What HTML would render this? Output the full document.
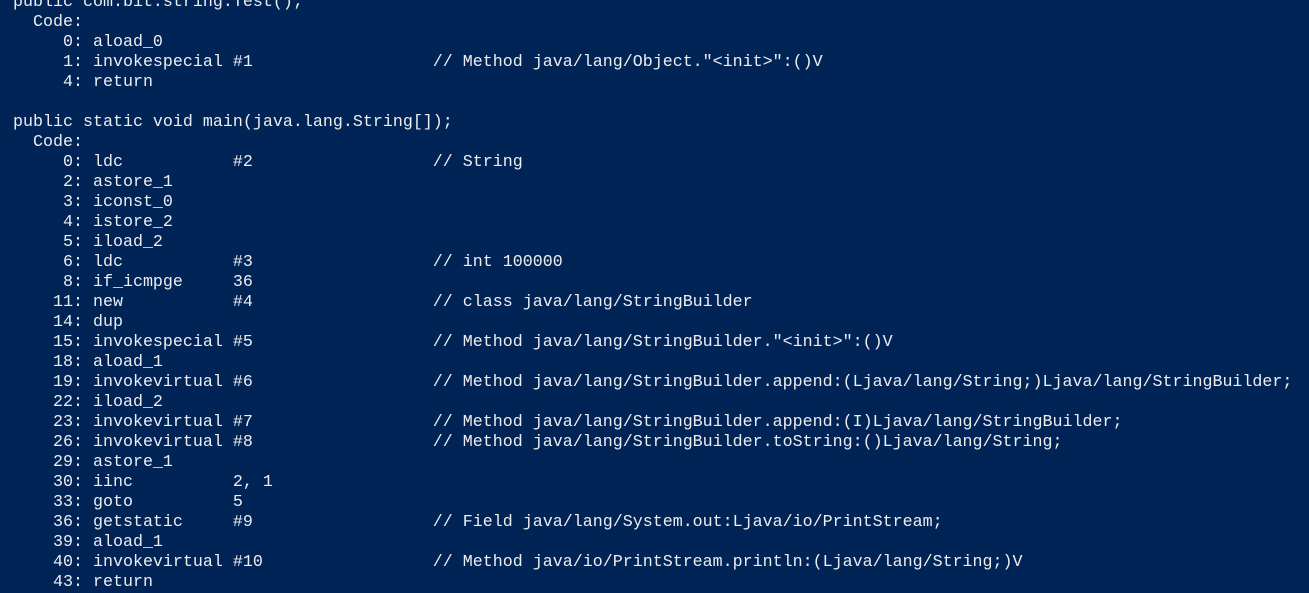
<!DOCTYPE html>
<html><head><meta charset="utf-8"><style>
html,body{margin:0;padding:0;width:1309px;height:583px;overflow:hidden;background:#012456;}
pre{position:absolute;left:13px;top:-7px;margin:0;font-family:"Liberation Mono",monospace;font-size:16.667px;line-height:20px;color:#eeedf0;white-space:pre;}
</style></head><body><pre>public com.bit.string.Test();
  Code:
     0: aload_0
     1: invokespecial #1                  // Method java/lang/Object."&lt;init&gt;":()V
     4: return

public static void main(java.lang.String[]);
  Code:
     0: ldc           #2                  // String
     2: astore_1
     3: iconst_0
     4: istore_2
     5: iload_2
     6: ldc           #3                  // int 100000
     8: if_icmpge     36
    11: new           #4                  // class java/lang/StringBuilder
    14: dup
    15: invokespecial #5                  // Method java/lang/StringBuilder."&lt;init&gt;":()V
    18: aload_1
    19: invokevirtual #6                  // Method java/lang/StringBuilder.append:(Ljava/lang/String;)Ljava/lang/StringBuilder;
    22: iload_2
    23: invokevirtual #7                  // Method java/lang/StringBuilder.append:(I)Ljava/lang/StringBuilder;
    26: invokevirtual #8                  // Method java/lang/StringBuilder.toString:()Ljava/lang/String;
    29: astore_1
    30: iinc          2, 1
    33: goto          5
    36: getstatic     #9                  // Field java/lang/System.out:Ljava/io/PrintStream;
    39: aload_1
    40: invokevirtual #10                 // Method java/io/PrintStream.println:(Ljava/lang/String;)V
    43: return</pre></body></html>
